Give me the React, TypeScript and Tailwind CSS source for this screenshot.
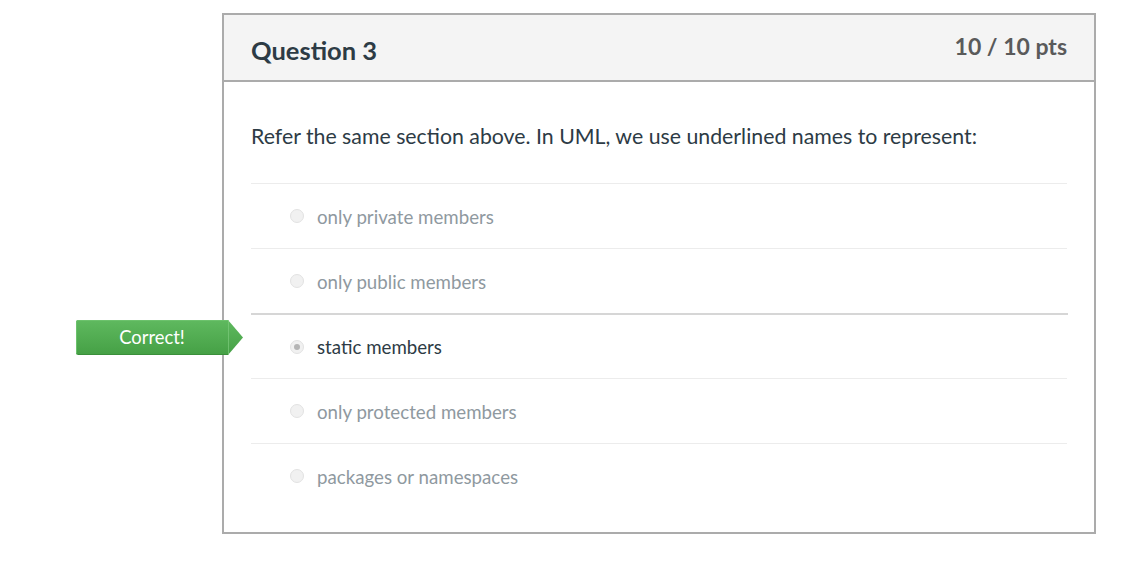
import React from "react";

const options = [
  { text: "only private members", selected: false },
  { text: "only public members", selected: false },
  { text: "static members", selected: true },
  { text: "only protected members", selected: false },
  { text: "packages or namespaces", selected: false },
];

function Radio({ selected }: { selected: boolean }) {
  return (
    <span className="flex h-[14px] w-[14px] shrink-0 items-center justify-center rounded-full border border-[#e2e2e2] bg-[#f1f1f1]">
      {selected && <span className="h-[6px] w-[6px] rounded-full bg-[#b5b5b5]" />}
    </span>
  );
}

export default function App() {
  return (
    <div className="min-h-[562px] w-[1144px] bg-white pt-[13px] font-['Lato',sans-serif]">
      <div className="relative ml-[222px] w-[874px] border-2 border-[#ababab]">
        <div className="flex h-[67px] justify-between border-b-2 border-[#ababab] bg-[#f4f4f4] px-[27px]">
          <div className="pt-[18px] text-[25.5px] font-bold leading-[34px] text-[#2d3b45]">Question 3</div>
          <div className="pt-[16px] text-[23px] font-bold leading-[30px] text-[#5a5a5a]">10 / 10 pts</div>
        </div>
        <div className="px-[27px] pb-[24px]">
          <div className="pt-[40px] pb-[33px] text-[21.3px] leading-[28px] text-[#2d3b45]">
            Refer the same section above. In UML, we use underlined names to represent:
          </div>
          {options.map((o, i) => (
            <div
              key={i}
              className={
                o.selected
                  ? "-mr-px flex h-[65px] items-center border-t-2 border-[#d6d6d6] pl-[39px]"
                  : "flex h-[65px] items-center border-t border-[#ececec] pl-[39px]"
              }
            >
              <Radio selected={o.selected} />
              <span
                className={
                  o.selected
                    ? "ml-[13px] pt-px text-[18.7px] leading-[24px] text-[#2d3b45]"
                    : "ml-[13px] pt-px text-[18.7px] leading-[24px] text-[#8f999f]"
                }
              >
                {o.text}
              </span>
            </div>
          ))}
        </div>
        <div className="absolute left-[-148px] top-[305px] h-[35px] w-[167px]">
          <svg width="167" height="35" viewBox="0 0 167 35" className="absolute left-0 top-0">
            <defs>
              <linearGradient id="g" x1="0" y1="0" x2="0" y2="1">
                <stop offset="0" stopColor="#5fb95f" />
                <stop offset="1" stopColor="#45a045" />
              </linearGradient>
            </defs>
            <path d="M2 0 H152 L167 17.5 L152 35 H2 Q0 35 0 33 V2 Q0 0 2 0 Z" fill="url(#g)" />
            <path d="M0.5 33 V2 Q0.5 0.5 2 0.5 H152" fill="none" stroke="#6cc26c" strokeWidth="1" />
            <line x1="152.5" y1="0" x2="152.5" y2="35" stroke="#7ccb7c" strokeWidth="1" opacity="0.7" />
            <line x1="2" y1="34.5" x2="152" y2="34.5" stroke="#3a8f3a" strokeWidth="1" />
          </svg>
          <div className="relative flex h-[35px] w-[152px] items-center justify-center text-[18.4px] text-white">
            Correct!
          </div>
        </div>
      </div>
    </div>
  );
}
